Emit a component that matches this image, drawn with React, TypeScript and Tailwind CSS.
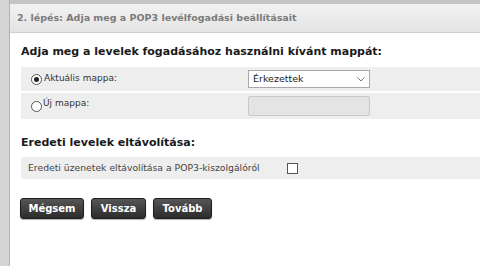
import React from "react";

const font = { fontFamily: '"DejaVu Sans", Verdana, sans-serif' };

function Radio({ checked }: { checked?: boolean }) {
  return (
    <span className="w-[11px] h-[11px] rounded-full border border-[#555] bg-white flex items-center justify-center shrink-0">
      {checked && <span className="w-[5px] h-[5px] rounded-full bg-[#222]" />}
    </span>
  );
}

function Btn({ label, w }: { label: string; w: string }) {
  return (
    <button
      className={`${w} h-[21px] rounded-[3px] border border-[#1e1e1e] bg-gradient-to-b from-[#565656] to-[#2c2c2c] text-white text-[10px] font-bold shadow-[0_1px_1px_rgba(0,0,0,0.3)]`}
    >
      {label}
    </button>
  );
}

export default function App() {
  return (
    <div className="w-[480px] h-[266px] bg-white flex overflow-hidden" style={font}>
      <div className="w-[10px] bg-[#d4d4d4] border-r border-[#b4b4b4] shrink-0" />
      <div className="flex-1 flex flex-col">
        <div className="h-[4px] bg-[#c4c4c4]" />
        <div className="h-[29px] bg-gradient-to-b from-[#f2f2f2] to-[#e4e4e4] border-b border-[#cfcfcf] flex items-center pl-[7px] text-[9.5px] font-bold text-[#7a7a7a]">
          2. lépés: Adja meg a POP3 levélfogadási beállításait
        </div>
        <div className="pl-[11px] pt-[10px]">
          <div className="text-[11px] font-bold text-[#1a1a1a] leading-[18px]">
            Adja meg a levelek fogadásához használni kívánt mappát:
          </div>
          <div className="mt-[6px] flex flex-col gap-[2px]">
            <div className="h-[24px] bg-[#eeeeee] flex items-center pl-[10px] text-[9px] text-[#333]">
              <Radio checked />
              <span className="ml-[2px] w-[204px]">Aktuális mappa:</span>
              <div className="w-[122px] h-[18px] bg-white border border-[#a8a8a8] flex items-center justify-between pl-[4px] pr-[4px] text-[9.5px] text-[#222]">
                <span>Érkezettek</span>
                <svg width="8" height="5" viewBox="0 0 8 5" fill="none" stroke="#777" strokeWidth="1">
                  <path d="M0.5 0.5l3.5 3.5L7.5 0.5" />
                </svg>
              </div>
            </div>
            <div className="h-[26px] bg-[#eeeeee] flex items-center pl-[10px] text-[9px] text-[#333]">
              <Radio />
              <span className="ml-[1px] w-[205px] -mt-[4px]">Új mappa:</span>
              <div className="w-[122px] h-[20px] rounded-[2px] bg-[#e4e4e4] border border-[#c8c8c8]" />
            </div>
          </div>
          <div className="mt-[15px] text-[11px] font-bold text-[#1a1a1a] leading-[18px]">
            Eredeti levelek eltávolítása:
          </div>
          <div className="mt-[5px] h-[22px] bg-[#eeeeee] flex items-center pl-[7px] text-[9.25px] text-[#444]">
            <span className="w-[259px]">Eredeti üzenetek eltávolítása a POP3-kiszolgálóról</span>
            <span className="w-[11px] h-[11px] border border-[#555] bg-white" />
          </div>
          <div className="mt-[19px] flex gap-[7px] -ml-[1px]">
            <Btn label="Mégsem" w="w-[64px]" />
            <Btn label="Vissza" w="w-[55px]" />
            <Btn label="Tovább" w="w-[59px]" />
          </div>
        </div>
      </div>
    </div>
  );
}
